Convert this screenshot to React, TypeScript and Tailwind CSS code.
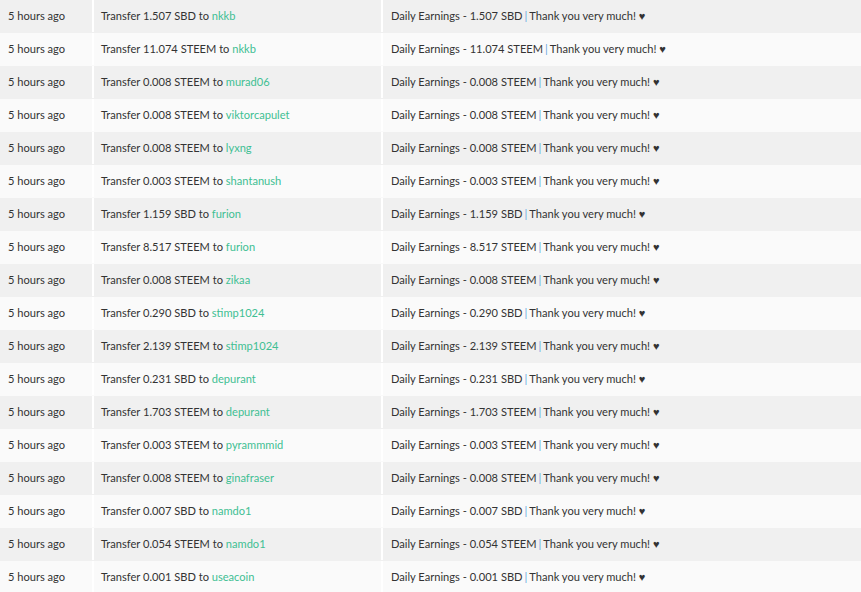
const rows: [string, string, string][] = [
  ["1.507", "SBD", "nkkb"],
  ["11.074", "STEEM", "nkkb"],
  ["0.008", "STEEM", "murad06"],
  ["0.008", "STEEM", "viktorcapulet"],
  ["0.008", "STEEM", "lyxng"],
  ["0.003", "STEEM", "shantanush"],
  ["1.159", "SBD", "furion"],
  ["8.517", "STEEM", "furion"],
  ["0.008", "STEEM", "zikaa"],
  ["0.290", "SBD", "stimp1024"],
  ["2.139", "STEEM", "stimp1024"],
  ["0.231", "SBD", "depurant"],
  ["1.703", "STEEM", "depurant"],
  ["0.003", "STEEM", "pyrammmid"],
  ["0.008", "STEEM", "ginafraser"],
  ["0.007", "SBD", "namdo1"],
  ["0.054", "STEEM", "namdo1"],
  ["0.001", "SBD", "useacoin"],
];

export default function App() {
  return (
    <div className="w-[861px] h-[592px] overflow-hidden bg-white text-[11.1px] text-[#333]" style={{ fontFamily: "Lato, 'Open Sans', sans-serif" }}>
      {rows.map(([amt, cur, to], i) => (
        <div key={i} className={`flex h-[33px] items-center pb-[1px] ${i % 2 === 0 ? "bg-[#f0f0f0]" : "bg-[#fafafa]"}`}>
          <div className="w-[94px] h-full flex items-center pl-[8px] border-r-2 border-white">5 hours ago</div>
          <div className="w-[289px] h-full flex items-center pl-[7px] border-r-2 border-white">
            Transfer {amt} {cur} to&nbsp;<span className="text-[#3fbf93]">{to}</span>
          </div>
          <div className="flex-1 h-full flex items-center pl-[8px]">
            Daily Earnings - {amt} {cur} <span className="text-[#6aa8e0] mx-[2px]">|</span> Thank you very much! ♥
          </div>
        </div>
      ))}
    </div>
  );
}
